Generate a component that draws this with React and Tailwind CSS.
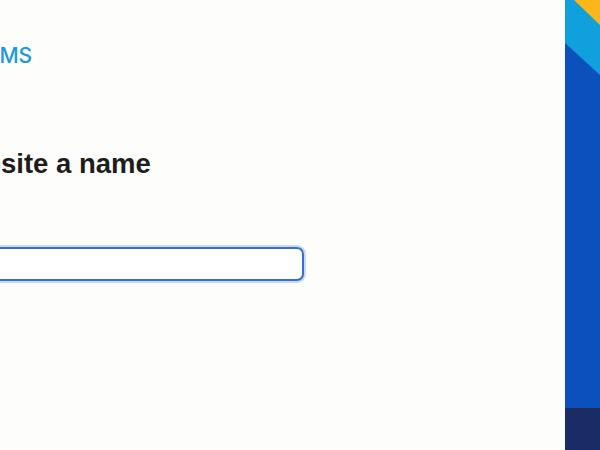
export default function App() {
  return (
    <div className="flex h-[450px] w-[600px] overflow-hidden bg-[#fdfdfc]" style={{ fontFamily: "'Liberation Sans', Arial, sans-serif" }}>
      {/* LEFT: form */}
      <div className="relative flex-1 overflow-hidden">
        <div className="ml-[-200px] pt-[43px]">
          <div className="pl-[184px] font-['Inter'] text-[21px] font-medium leading-[26px] text-[#1a9ad6]">CMS</div>

          <h1 className="mt-[78px] whitespace-nowrap pl-[13px] text-[27.5px] font-bold leading-[33px] text-[#1d1d1f]">
            Give your website a name
          </h1>

          <div className="mt-[67px] h-[34px] w-[504px] rounded-[7px] border-2 border-[#3470d4] bg-white ring-2 ring-[#c9dbf6]" />
        </div>
      </div>

      {/* RIGHT: brand stripe */}
      <div className="flex w-[35px] flex-col">
        <div className="flex-1 bg-[#0b50bd]">
          <svg width="35" height="408" viewBox="0 0 35 408" className="block">
            <polygon points="0,0 35,0 35,75 0,43" fill="#0fa0dd" />
            <polygon points="9,0 35,0 35,25" fill="#fbb61c" />
          </svg>
        </div>
        <div className="h-[42px] bg-[#1b2b63]" />
      </div>
    </div>
  );
}
